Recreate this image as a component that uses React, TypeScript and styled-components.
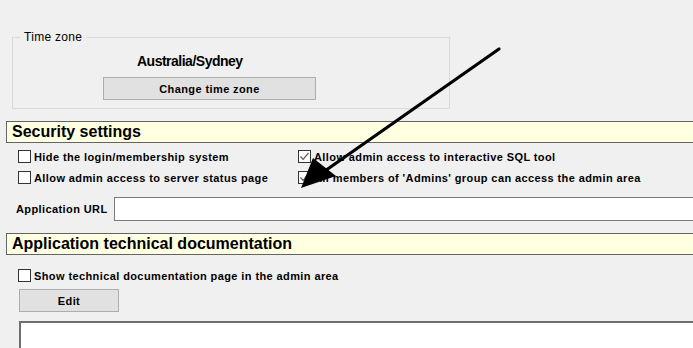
import React from "react";
import styled, { createGlobalStyle } from "styled-components";

const GlobalStyle = createGlobalStyle`
  html, body {
    margin: 0;
    padding: 0;
    background: #f0f0f0;
  }
`;

const Page = styled.div`
  position: relative;
  width: 693px;
  height: 348px;
  overflow: hidden;
  background: #f0f0f0;
  font-family: "Liberation Sans", Arial, sans-serif;
  color: #000;
  display: flex;
  flex-direction: column;
  padding-top: 30px;
  box-sizing: border-box;
`;

const GroupBox = styled.fieldset`
  margin: 0 0 0 12px;
  padding: 8px 0 8px 0;
  width: 438px;
  box-sizing: border-box;
  border: 1px solid #d9d9d9;
  display: flex;
  flex-direction: column;
  align-items: flex-start;
`;

const Legend = styled.legend`
  margin-left: 7px;
  padding: 0 4px;
  font-size: 12px;
  line-height: 14px;
  letter-spacing: 0.3px;
`;

const ZoneName = styled.div`
  margin-left: 124px;
  font-size: 14px;
  font-weight: bold;
  letter-spacing: -0.5px;
  line-height: 18px;
`;

const Button = styled.button<{ $width: number }>`
  width: ${(p) => p.$width}px;
  height: 23px;
  padding: 0;
  background: #e1e1e1;
  border: 1px solid #adadad;
  font-family: "Liberation Sans", Arial, sans-serif;
  font-size: 11px;
  font-weight: bold;
  letter-spacing: 0.4px;
  color: #000;
`;

const ChangeButton = styled(Button)`
  margin: 7px 0 0 90px;
`;

const SectionHeader = styled.div<{ $gap: number }>`
  margin: ${(p) => p.$gap}px -20px 0 6px;
  height: 22px;
  box-sizing: border-box;
  background: #ffffe1;
  border: 1px solid #646464;
  padding-left: 5px;
  font-size: 16px;
  font-weight: bold;
  line-height: 20px;
`;

const CheckGrid = styled.div`
  margin: 3px 0 0 18px;
  display: grid;
  grid-template-columns: 280px auto;
  grid-auto-rows: 21px;
`;

const CheckRow = styled.label`
  display: flex;
  align-items: center;
  gap: 3px;
  font-size: 11px;
  font-weight: bold;
  letter-spacing: 0.4px;
  white-space: nowrap;
`;

const Box = styled.span`
  width: 13px;
  height: 13px;
  box-sizing: border-box;
  border: 1px solid #333;
  background: #fff;
  display: flex;
  align-items: center;
  justify-content: center;
`;

const UrlRow = styled.div`
  margin: 9px -20px 0 16px;
  display: flex;
  align-items: center;
  gap: 10px;
`;

const FieldLabel = styled.span`
  width: 88px;
  font-size: 11px;
  font-weight: bold;
  letter-spacing: 0.4px;
  white-space: nowrap;
`;

const TextInput = styled.div`
  flex: 1;
  height: 24px;
  box-sizing: border-box;
  background: #fff;
  border: 1px solid #7a7a7a;
`;

const DocBlock = styled.div`
  margin: 14px 0 0 18px;
  height: 21px;
  display: flex;
`;

const ButtonRow = styled.div`
  display: flex;
  margin: 7px 0 0 19px;
`;

const TextArea = styled.div`
  margin: 9px -20px 0 19px;
  height: 60px;
  background: #fff;
  border-top: 2px solid #6e6e6e;
  border-left: 2px solid #6e6e6e;
`;

const ArrowLayer = styled.svg`
  position: absolute;
  left: 0;
  top: 0;
  pointer-events: none;
`;

function Check({ label, checked }: { label: string; checked?: boolean }) {
  return (
    <CheckRow>
      <Box>
        {checked && (
          <svg width="11" height="11" viewBox="0 0 11 11">
            <polyline
              points="1.5,5.5 4.2,8.3 9.5,1.8"
              fill="none"
              stroke="#555"
              strokeWidth="1.2"
            />
          </svg>
        )}
      </Box>
      {label}
    </CheckRow>
  );
}

export default function App() {
  return (
    <>
      <GlobalStyle />
      <Page>
        <GroupBox>
          <Legend>Time zone</Legend>
          <ZoneName>Australia/Sydney</ZoneName>
          <ChangeButton $width={213}>Change time zone</ChangeButton>
        </GroupBox>

        <SectionHeader $gap={12}>Security settings</SectionHeader>
        <CheckGrid>
          <Check label="Hide the login/membership system" />
          <Check label="Allow admin access to interactive SQL tool" checked />
          <Check label="Allow admin access to server status page" />
          <Check label="All members of 'Admins' group can access the admin area" checked />
        </CheckGrid>
        <UrlRow>
          <FieldLabel>Application URL</FieldLabel>
          <TextInput />
        </UrlRow>

        <SectionHeader $gap={12}>Application technical documentation</SectionHeader>
        <DocBlock>
          <Check label="Show technical documentation page in the admin area" />
        </DocBlock>
        <ButtonRow>
          <Button $width={100}>Edit</Button>
        </ButtonRow>
        <TextArea />

        <ArrowLayer width="693" height="348" viewBox="0 0 693 348">
          <line x1="499" y1="49" x2="322" y2="173" stroke="#000" strokeWidth="3.2" strokeLinecap="round" />
          <polygon points="301,188 313,158 336,176" fill="#000" />
        </ArrowLayer>
      </Page>
    </>
  );
}
